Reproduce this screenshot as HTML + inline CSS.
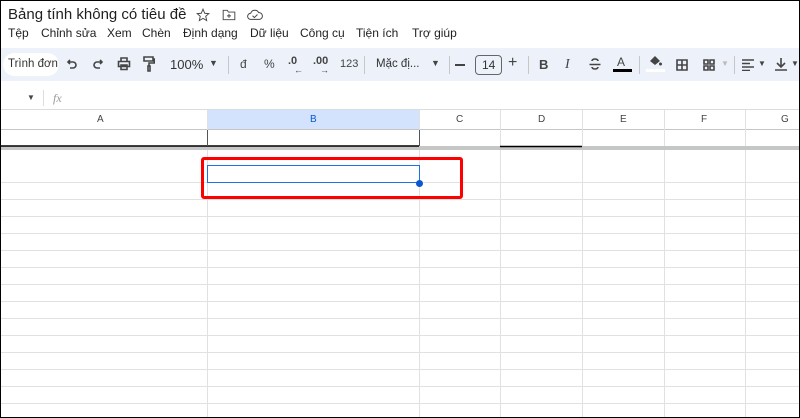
<!DOCTYPE html>
<html><head><meta charset="utf-8"><style>
*{margin:0;padding:0;box-sizing:border-box}
body{width:800px;height:418px;overflow:hidden;background:#fff;font-family:"Liberation Sans",sans-serif;color:#1f1f1f;position:relative}
.abs{position:absolute}
.t{position:absolute;white-space:nowrap}
svg{position:absolute}
.ic{stroke:#444;fill:none;stroke-width:1.6}
</style></head><body>
<div class="t" style="left:8px;top:6px;font-size:15px;color:#1f1f1f">Bảng tính không có tiêu đề</div>
<svg style="left:196px;top:8px" width="14" height="14" viewBox="0 0 24 24"><path class="ic" stroke-width="2" d="M12 2l3 7 7 .6-5.3 4.6 1.6 7.3L12 17.8 5.7 21.5l1.6-7.3L2 9.6 9 9z"/></svg>
<svg style="left:222px;top:9px" width="14" height="12" viewBox="0 0 24 20"><path class="ic" stroke-width="2.2" d="M2 2h7l2 3h11v13H2zM12 8v7M8.5 11.5h7"/></svg>
<svg style="left:247px;top:8px" width="16" height="13" viewBox="0 0 26 20"><path class="ic" stroke-width="2.2" d="M6 18a5 5 0 0 1 0-10 7 7 0 0 1 13-1 5.5 5.5 0 0 1 1 11zM9 12l3 3 5-5"/></svg>
<div class="t" style="left:8px;top:26px;font-size:12px">
<span style="position:absolute;left:0">Tệp</span><span style="position:absolute;left:33px">Chỉnh sửa</span><span style="position:absolute;left:99px">Xem</span><span style="position:absolute;left:134px">Chèn</span><span style="position:absolute;left:175px">Định dạng</span><span style="position:absolute;left:242px">Dữ liệu</span><span style="position:absolute;left:292px">Công cụ</span><span style="position:absolute;left:348px">Tiện ích</span><span style="position:absolute;left:404px">Trợ giúp</span></div>

<div class="abs" style="left:0;top:48px;width:800px;height:33px;background:#edf2fa"></div>
<div class="abs" style="left:3px;top:53px;width:56px;height:23px;background:#fff;border-radius:12px"></div>
<div class="t" style="left:8px;top:58px;font-size:11.5px;color:#333">Trình đơn</div>
<svg style="left:66px;top:58px" width="12" height="12" viewBox="0 0 12 12"><path class="ic" d="M4 2L2 4l2 2M2 4h5a3 3 0 0 1 0 6H4"/></svg>
<svg style="left:92px;top:58px" width="12" height="12" viewBox="0 0 12 12"><path class="ic" d="M8 2l2 2-2 2M10 4H5a3 3 0 0 0 0 6h3"/></svg>
<svg style="left:117px;top:57px" width="14" height="14" viewBox="0 0 14 14"><path class="ic" d="M4 4V1h6v3M1.5 4.5h11v5h-11zM4 8h6v4.5H4z"/></svg>
<svg style="left:143px;top:56px" width="12" height="16" viewBox="0 0 12 16"><path class="ic" d="M1 1h9v4H1zM10 3h1.2v4H6v3M5 10h2v5H5z"/></svg>
<div class="t" style="left:170px;top:57px;font-size:13px;color:#333">100%</div>
<div class="t" style="left:209px;top:58px;font-size:9px;color:#444">▼</div>
<div class="abs" style="left:228px;top:56px;width:1px;height:18px;background:#c7c7c7"></div>
<div class="t" style="left:240px;top:57px;font-size:12px;color:#444">đ</div>
<div class="t" style="left:264px;top:57px;font-size:12px;color:#444">%</div>
<div class="t" style="left:288px;top:55px;font-size:11px;color:#444;font-weight:bold">.0</div>
<div class="t" style="left:294px;top:65px;font-size:9px;color:#444">←</div>
<div class="t" style="left:313px;top:55px;font-size:11px;color:#444;font-weight:bold">.00</div>
<div class="t" style="left:320px;top:65px;font-size:9px;color:#444">→</div>
<div class="t" style="left:340px;top:58px;font-size:11px;color:#444">123</div>
<div class="abs" style="left:364px;top:56px;width:1px;height:18px;background:#c7c7c7"></div>
<div class="t" style="left:376px;top:58px;font-size:11.5px;color:#333">Mặc đị...</div>
<div class="t" style="left:431px;top:58px;font-size:9px;color:#444">▼</div>
<div class="abs" style="left:449px;top:56px;width:1px;height:18px;background:#c7c7c7"></div>
<div class="abs" style="left:455px;top:64px;width:10px;height:1.6px;background:#444"></div>
<div class="abs" style="left:475px;top:55px;width:27px;height:20px;border:1.3px solid #666;border-radius:4px"></div>
<div class="t" style="left:482px;top:58px;font-size:12px;color:#333">14</div>
<div class="t" style="left:508px;top:54px;font-size:16px;color:#444">+</div>
<div class="abs" style="left:528px;top:56px;width:1px;height:18px;background:#c7c7c7"></div>
<div class="t" style="left:539px;top:57px;font-size:13px;font-weight:bold;color:#444">B</div>
<div class="t" style="left:565px;top:57px;font-size:14px;font-style:italic;font-family:'Liberation Serif',serif;color:#444">I</div>
<svg style="left:589px;top:58px" width="12" height="13" viewBox="0 0 12 13"><path class="ic" d="M9 3a3 2 0 0 0-6 0M0.5 6.5h11M3 9a3 2 0 0 0 6 0"/></svg>
<div class="t" style="left:617px;top:55px;font-size:12px;color:#444">A</div>
<div class="abs" style="left:613px;top:69px;width:19px;height:3px;background:#000"></div>
<div class="abs" style="left:639px;top:56px;width:1px;height:18px;background:#c7c7c7"></div>
<svg style="left:648px;top:55px" width="14" height="12" viewBox="0 0 14 12"><path d="M2 6l5-5 5 5-5 4z" fill="#444"/><circle cx="12.5" cy="9" r="1.5" fill="#444"/></svg>
<div class="abs" style="left:646px;top:69px;width:19px;height:3px;background:#fff"></div>
<svg style="left:676px;top:59px" width="12" height="12" viewBox="0 0 12 12"><path class="ic" d="M1 1h10v10H1zM6 1v10M1 6h10"/></svg>
<svg style="left:703px;top:59px" width="12" height="12" viewBox="0 0 12 12"><path class="ic" stroke="#bbb" d="M1 1h4v4H1zM7 1h4v4H7zM1 7h4v4H1zM7 7h4v4H7z"/></svg>
<div class="t" style="left:721px;top:59px;font-size:8px;color:#bbb">▼</div>
<div class="abs" style="left:734px;top:56px;width:1px;height:18px;background:#c7c7c7"></div>
<svg style="left:742px;top:59px" width="12" height="12" viewBox="0 0 12 12"><path class="ic" d="M0 1h12M0 4.5h8M0 8h12M0 11.5h8"/></svg>
<div class="t" style="left:758px;top:59px;font-size:8px;color:#444">▼</div>
<svg style="left:775px;top:57px" width="12" height="14" viewBox="0 0 12 14"><path class="ic" d="M6 1v9M2 6l4 4 4-4M0 13h12"/></svg>
<div class="t" style="left:791px;top:59px;font-size:8px;color:#444">▼</div>

<div class="t" style="left:27px;top:93px;font-size:8px;color:#444">▼</div>
<div class="abs" style="left:43px;top:90px;width:1px;height:16px;background:#ddd"></div>
<div class="t" style="left:53px;top:91px;font-size:12px;font-style:italic;font-family:'Liberation Serif',serif;color:#999">fx</div>
<div class="abs" style="left:0;top:109px;width:800px;height:1px;background:#dadce0"></div>

<div class="abs" style="left:207px;top:110px;width:212px;height:19px;background:#d3e3fd"></div>
<div class="abs" style="left:0;top:129px;width:800px;height:1px;background:#c4c7c5"></div>
<div class="t" style="left:97px;top:114px;font-size:10px;color:#444">A</div>
<div class="t" style="left:310px;top:114px;font-size:10px;color:#0b57d0">B</div>
<div class="t" style="left:456px;top:114px;font-size:10px;color:#444">C</div>
<div class="t" style="left:538px;top:114px;font-size:10px;color:#444">D</div>
<div class="t" style="left:620px;top:114px;font-size:10px;color:#444">E</div>
<div class="t" style="left:701px;top:114px;font-size:10px;color:#444">F</div>
<div class="t" style="left:781px;top:114px;font-size:10px;color:#444">G</div>

<svg style="left:0;top:110px" width="800" height="308">
<g stroke="#e1e1e1" stroke-width="1">
<line x1="0" y1="72.5" x2="800" y2="72.5"/><line x1="0" y1="89.5" x2="800" y2="89.5"/><line x1="0" y1="106.5" x2="800" y2="106.5"/><line x1="0" y1="123.5" x2="800" y2="123.5"/><line x1="0" y1="140.5" x2="800" y2="140.5"/><line x1="0" y1="157.5" x2="800" y2="157.5"/><line x1="0" y1="174.5" x2="800" y2="174.5"/><line x1="0" y1="191.5" x2="800" y2="191.5"/><line x1="0" y1="208.5" x2="800" y2="208.5"/><line x1="0" y1="225.5" x2="800" y2="225.5"/><line x1="0" y1="242.5" x2="800" y2="242.5"/><line x1="0" y1="259.5" x2="800" y2="259.5"/><line x1="0" y1="276.5" x2="800" y2="276.5"/><line x1="0" y1="293.5" x2="800" y2="293.5"/>
<line x1="207.5" y1="0" x2="207.5" y2="308"/><line x1="419.5" y1="0" x2="419.5" y2="308"/><line x1="500.5" y1="0" x2="500.5" y2="308"/><line x1="582.5" y1="0" x2="582.5" y2="308"/><line x1="664.5" y1="0" x2="664.5" y2="308"/><line x1="745.5" y1="0" x2="745.5" y2="308"/>
</g>
<rect x="0" y="36" width="800" height="4" fill="#c4c7c5"/>
<line x1="0" y1="36" x2="419" y2="36" stroke="#000" stroke-width="1.5"/>
<line x1="500" y1="36.5" x2="582" y2="36.5" stroke="#000" stroke-width="1.5"/>
<line x1="207.5" y1="20" x2="207.5" y2="36" stroke="#555"/>
<line x1="419.5" y1="20" x2="419.5" y2="36" stroke="#555"/>
</svg>

<div class="abs" style="left:207px;top:165px;width:213px;height:18px;border:1.5px solid #1a73e8"></div>
<div class="abs" style="left:416px;top:180px;width:7px;height:7px;border-radius:50%;background:#0b57d0"></div>
<div class="abs" style="left:201px;top:157px;width:262px;height:42px;border:3px solid #f00;border-radius:3px"></div>

<div class="abs" style="left:0;top:0;width:800px;height:418px;border:1px solid #000"></div>
</body></html>
